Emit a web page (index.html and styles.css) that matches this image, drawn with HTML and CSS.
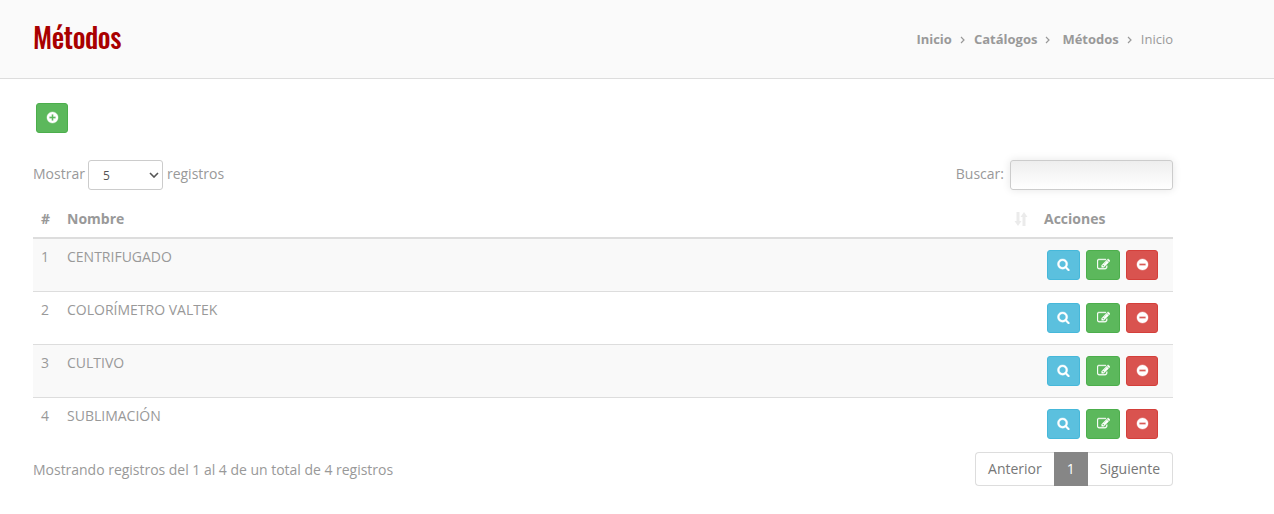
FILE: index.html
```html
<!DOCTYPE html>
<html lang="es">

<head>
    <meta charset="UTF-8">
    <meta name="viewport" content="width=device-width, initial-scale=1.0">
    <title>Métodos</title>
    <link rel="stylesheet" href="styles.css">
</head>

<body>
    <svg class="sprite">
        <symbol id="plus" viewBox="0 0 1792 1792"><path d="M1344 960v-128q0-26-19-45t-45-19h-256v-256q0-26-19-45t-45-19h-128q-26 0-45 19t-19 45v256h-256q-26 0-45 19t-19 45v128q0 26 19 45t45 19h256v256q0 26 19 45t45 19h128q26 0 45-19t19-45v-256h256q26 0 45-19t19-45zm320-64q0 209-103 385.500t-279.500 279.500-385.500 103-385.500-103-279.500-279.500-103-385.500 103-385.500 279.500-279.500 385.500-103 385.500 103 279.500 279.500 103 385.500z"/></symbol>
        <symbol id="minus" viewBox="0 0 1792 1792"><path d="M1344 960v-128q0-26-19-45t-45-19h-768q-26 0-45 19t-19 45v128q0 26 19 45t45 19h768q26 0 45-19t19-45zm320-64q0 209-103 385.500t-279.500 279.500-385.500 103-385.500-103-279.500-279.500-103-385.500 103-385.500 279.500-279.500 385.500-103 385.500 103 279.500 279.500 103 385.500z"/></symbol>
        <symbol id="search" viewBox="0 0 1792 1792"><path d="M1216 832q0-185-131.500-316.500t-316.500-131.500-316.500 131.500-131.500 316.500 131.500 316.500 316.500 131.500 316.500-131.500 131.500-316.500zm512 832q0 52-38 90t-90 38q-54 0-90-38l-343-342q-179 124-399 124-143 0-273.500-55.500t-225-150-150-225-55.500-273.500 55.500-273.500 150-225 225-150 273.500-55.500 273.500 55.500 225 150 150 225 55.500 273.500q0 220-124 399l343 343q37 37 37 90z"/></symbol>
        <symbol id="edit" viewBox="0 0 1792 1792"><path d="M888 1184l116-116-152-152-116 116v56h96v96h56zm440-720q-16-16-33 1l-350 350q-17 17-1 33t33-1l350-350q17-17 1-33zm80 594v190q0 119-84.500 203.500t-203.500 84.500h-832q-119 0-203.500-84.500t-84.500-203.500v-832q0-119 84.500-203.500t203.500-84.500h832q63 0 117 25 15 7 18 23 3 17-9 29l-49 49q-14 14-32 8-23-6-45-6h-832q-66 0-113 47t-47 113v832q0 66 47 113t113 47h832q66 0 113-47t47-113v-126q0-13 9-22l64-64q15-15 35-7t20 29zm-96-738l288 288-672 672h-288v-288zm444 132l-92 92-288-288 92-92q28-28 68-28t68 28l152 152q28 28 28 68t-28 68z"/></symbol>
    </svg>

    <header class="page-header">
        <h1>Métodos</h1>
        <nav class="breadcrumb">
            <a href="#">Inicio</a>
            <svg class="chevron" viewBox="0 0 5 8"><path d="M1 1l3 3-3 3"/></svg>
            <a href="#">Catálogos</a>
            <svg class="chevron wide" viewBox="0 0 5 8"><path d="M1 1l3 3-3 3"/></svg>
            <a href="#">Métodos</a>
            <svg class="chevron" viewBox="0 0 5 8"><path d="M1 1l3 3-3 3"/></svg>
            <span>Inicio</span>
        </nav>
    </header>

    <main class="content">
        <button class="btn btn-success btn-add" title="Agregar"><svg><use href="#plus"/></svg></button>

        <div class="table-controls">
            <label>Mostrar
                <span class="select-wrap">
                    <select class="length-select">
                        <option>5</option>
                        <option>10</option>
                        <option>25</option>
                    </select>
                    <svg class="caret" viewBox="0 0 10 6"><path d="M1 1l4 4 4-4"/></svg>
                </span>
                registros
            </label>
            <label>Buscar: <input type="search" class="search-input"></label>
        </div>

        <table class="table">
            <thead>
                <tr>
                    <th class="col-num">#</th>
                    <th>
                        <div class="sortable">Nombre
                            <svg class="sort-icon" viewBox="0 0 14 14"><path d="M2.500 0h3v9H7.500L4 14 .5 9h2zM8.500 14h3V5h2L10 0 6.500 5h2z"/></svg>
                        </div>
                    </th>
                    <th class="col-actions">Acciones</th>
                </tr>
            </thead>
            <tbody>
                <tr>
                    <td>1</td>
                    <td>CENTRIFUGADO</td>
                    <td>
                        <div class="actions">
                            <button class="btn btn-info"><svg><use href="#search"/></svg></button>
                            <button class="btn btn-success"><svg><use href="#edit"/></svg></button>
                            <button class="btn btn-danger"><svg><use href="#minus"/></svg></button>
                        </div>
                    </td>
                </tr>
                <tr>
                    <td>2</td>
                    <td>COLORÍMETRO VALTEK</td>
                    <td>
                        <div class="actions">
                            <button class="btn btn-info"><svg><use href="#search"/></svg></button>
                            <button class="btn btn-success"><svg><use href="#edit"/></svg></button>
                            <button class="btn btn-danger"><svg><use href="#minus"/></svg></button>
                        </div>
                    </td>
                </tr>
                <tr>
                    <td>3</td>
                    <td>CULTIVO</td>
                    <td>
                        <div class="actions">
                            <button class="btn btn-info"><svg><use href="#search"/></svg></button>
                            <button class="btn btn-success"><svg><use href="#edit"/></svg></button>
                            <button class="btn btn-danger"><svg><use href="#minus"/></svg></button>
                        </div>
                    </td>
                </tr>
                <tr>
                    <td>4</td>
                    <td>SUBLIMACIÓN</td>
                    <td>
                        <div class="actions">
                            <button class="btn btn-info"><svg><use href="#search"/></svg></button>
                            <button class="btn btn-success"><svg><use href="#edit"/></svg></button>
                            <button class="btn btn-danger"><svg><use href="#minus"/></svg></button>
                        </div>
                    </td>
                </tr>
            </tbody>
        </table>

        <div class="table-footer">
            <p>Mostrando registros del 1 al 4 de un total de 4 registros</p>
            <div class="pagination">
                <a href="#" class="prev">Anterior</a>
                <a href="#" class="active">1</a>
                <a href="#" class="next">Siguiente</a>
            </div>
        </div>
    </main>
</body>

</html>
```
FILE: styles.css
```css
* {
    margin: 0;
    padding: 0;
    box-sizing: border-box;
}

:root {
    --text: #999;
    --border: #ddd;
    --title: #a90000;
}

body {
    background: #fff;
    color: var(--text);
    font-family: "Open Sans", sans-serif;
    font-size: 14px;
    line-height: 20px;
}

a {
    color: inherit;
    text-decoration: none;
}

.sprite {
    display: none;
}

.page-header {
    display: flex;
    justify-content: space-between;
    height: 79px;
    padding: 0 101px 0 33px;
    background: #fafafa;
    border-bottom: 1px solid var(--border);
}

.page-header h1 {
    margin-top: 17px;
    color: var(--title);
    font-family: Oswald, Roboto, sans-serif;
    font-size: 28px;
    font-weight: 500;
    letter-spacing: -0.4px;
    line-height: 40px;
}

.breadcrumb {
    display: flex;
    align-items: center;
    height: 20px;
    margin-top: 29px;
    font-size: 13px;
}

.breadcrumb a {
    font-weight: 700;
}

.chevron {
    width: 5px;
    height: 8px;
    margin: 2px 9px 0 8px;
    fill: none;
    stroke: var(--text);
    stroke-width: 1.2;
}

.chevron.wide {
    margin-right: 12px;
}

.content {
    width: 1140px;
    margin: 24px 0 0 33px;
}

.btn {
    display: flex;
    align-items: center;
    justify-content: center;
    width: 32px;
    height: 30px;
    border: 1px solid;
    border-radius: 3px;
    cursor: pointer;
}

.btn svg {
    width: 13px;
    height: 13px;
    margin-bottom: 1px;
    fill: #fff;
    stroke: #fff;
    stroke-width: 50;
}

.btn-add {
    margin-left: 3px;
}

.btn-info {
    width: 33px;
    background: #5bc0de;
    border-color: #46b8da;
}

.btn-success {
    background: #5cb85c;
    border-color: #4cae4c;
}

.actions .btn-success {
    width: 34px;
}

.btn-danger {
    background: #d9534f;
    border-color: #d43f3a;
}

.table-controls {
    display: flex;
    justify-content: space-between;
    margin-top: 27px;
}

.table-controls label {
    display: flex;
    align-items: center;
    gap: 3px;
    height: 28px;
}

.select-wrap {
    display: flex;
    align-items: center;
    margin: 2px 1px 0 0;
}

.length-select {
    width: 75px;
    height: 30px;
    padding: 0 14px;
    appearance: none;
    background: #fff;
    border: 1px solid #ccc;
    border-radius: 3px;
    color: #555;
    font-family: inherit;
    font-size: 12px;
}

.caret {
    width: 10px;
    height: 6px;
    margin-left: -14px;
    margin-right: 4px;
    fill: none;
    stroke: #555;
    stroke-width: 1.6;
}

.search-input {
    width: 163px;
    height: 30px;
    margin: 2px 0 0 3px;
    padding: 0 10px;
    background: linear-gradient(#eee, #fff);
    border: 1px solid #ccc;
    border-radius: 3px;
    box-shadow: 0 0 8px rgba(0, 0, 0, 0.1);
}

.table {
    width: 100%;
    margin-top: 13px;
    border-collapse: separate;
    border-spacing: 0;
    table-layout: fixed;
}

.table th {
    height: 38px;
    padding: 8px;
    border-bottom: 2px solid var(--border);
    font-weight: 700;
    line-height: 20px;
    text-align: left;
}

.table td {
    height: 53px;
    padding: 8px;
    border-bottom: 1px solid var(--border);
    vertical-align: top;
}

.table tbody tr:nth-child(odd) {
    background: #f9f9f9;
}

.table tbody tr:last-child td {
    border-bottom: none;
}

.col-num {
    width: 26px;
}

.col-actions {
    width: 137px;
}

.sortable {
    display: flex;
    align-items: center;
    justify-content: space-between;
}

.sort-icon {
    width: 14px;
    height: 14px;
    fill: #ebebeb;
}

.actions {
    display: flex;
    gap: 6px;
    padding: 3px 0 0 3px;
}

.table-footer {
    display: flex;
    justify-content: space-between;
    margin-top: 1px;
}

.table-footer p {
    padding-top: 8px;
    letter-spacing: -0.02px;
}

.pagination {
    display: flex;
    color: #777;
}

.pagination a {
    height: 34px;
    padding: 6px 12px;
    border: 1px solid var(--border);
}

.pagination .prev {
    border-right: none;
    border-radius: 4px 0 0 4px;
}

.pagination .next {
    border-left: none;
    border-radius: 0 4px 4px 0;
}

.pagination .active {
    background: #868686;
    border-color: #868686;
    color: #fff;
}
```
